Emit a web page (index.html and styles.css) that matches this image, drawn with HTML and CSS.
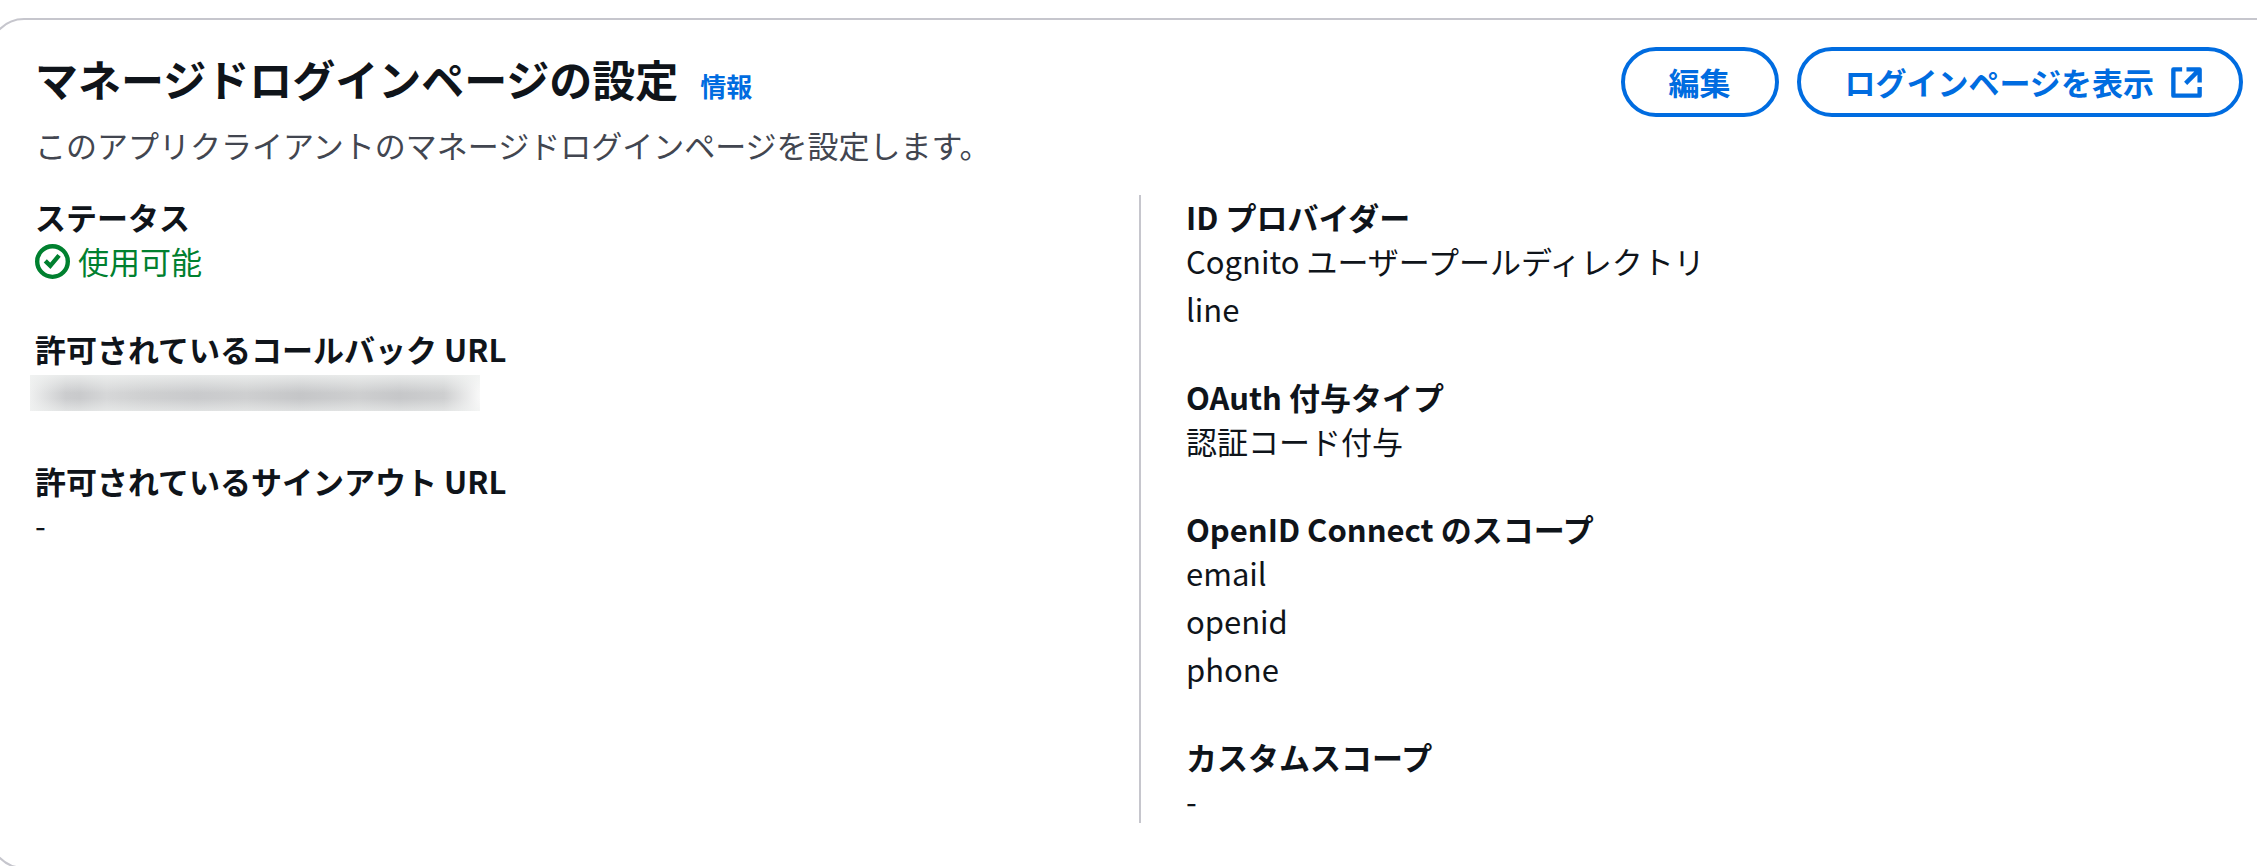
FILE: index.html
```
<!DOCTYPE html>
<html lang="ja">
<head>
    <meta charset="UTF-8">
    <meta name="viewport" content="width=device-width, initial-scale=1.0">
    <title>マネージドログインページの設定</title>
    <link rel="stylesheet" href="styles.css">
</head>
<body>
    <section class="container">
        <header class="header">
            <div class="header-text">
                <div class="title-row">
                    <h2>マネージドログインページの設定</h2>
                    <a class="info-link" href="#">情報</a>
                </div>
                <p class="description">このアプリクライアントのマネージドログインページを設定します。</p>
            </div>
            <div class="actions">
                <button class="button" type="button">編集</button>
                <button class="button button-external" type="button">
                    ログインページを表示
                    <svg class="icon" viewBox="0 0 16 16" fill="none" stroke="currentColor" stroke-width="2" stroke-linejoin="round" aria-hidden="true">
                        <path d="M6 2H2v12h12v-4"/>
                        <path d="M8 2h6v6M14 2L7.6 8.4"/>
                    </svg>
                </button>
            </div>
        </header>

        <div class="columns">
            <dl class="column">
                <div class="field">
                    <dt>ステータス</dt>
                    <dd class="status">
                        <svg class="icon" viewBox="0 0 16 16" fill="none" stroke="currentColor" stroke-width="2" aria-hidden="true">
                            <circle cx="8" cy="8" r="7"/>
                            <path d="M4.7 7.7l2.3 2.3 4-4.8"/>
                        </svg>
                        使用可能
                    </dd>
                </div>
                <div class="field">
                    <dt>許可されているコールバック URL</dt>
                    <dd class="masked-row"><span class="masked"></span></dd>
                </div>
                <div class="field">
                    <dt>許可されているサインアウト URL</dt>
                    <dd>-</dd>
                </div>
            </dl>
            <dl class="column">
                <div class="field">
                    <dt>ID プロバイダー</dt>
                    <dd>Cognito ユーザープールディレクトリ</dd>
                    <dd>line</dd>
                </div>
                <div class="field">
                    <dt>OAuth 付与タイプ</dt>
                    <dd>認証コード付与</dd>
                </div>
                <div class="field">
                    <dt>OpenID Connect のスコープ</dt>
                    <dd>email</dd>
                    <dd>openid</dd>
                    <dd>phone</dd>
                </div>
                <div class="field">
                    <dt>カスタムスコープ</dt>
                    <dd>-</dd>
                </div>
            </dl>
        </div>
    </section>
</body>
</html>
```
FILE: styles.css
```
* {
    box-sizing: border-box;
}

body {
    margin: 0;
    padding-top: 18px;
    background: #fff;
    color: #0f141a;
    font-family: "Noto Sans CJK JP", sans-serif;
    font-size: 31px;
    line-height: 44px;
    overflow: hidden;
}

/* the card runs past both sides of the window */
.container {
    margin: 0 -32px 0 -11px;
    padding: 27px 44px 44px;
    border: 2px solid #c6c6cd;
    border-radius: 35px;
}

.header {
    display: flex;
    justify-content: space-between;
    align-items: flex-start;
    margin-bottom: 28px;
}

.header-text {
    padding-top: 5px;
}

.title-row {
    display: flex;
    align-items: baseline;
    gap: 22px;
}

h2 {
    margin: 0;
    font-size: 43px;
    font-weight: 700;
    line-height: 53px;
}

.info-link {
    color: #006ce0;
    font-size: 26px;
    font-weight: 700;
    line-height: 26px;
    text-decoration: none;
}

.description {
    margin: 18px 0 0;
    color: #424650;
}

.actions {
    display: flex;
    gap: 18px;
}

.button {
    display: flex;
    align-items: center;
    gap: 15px;
    padding: 9px 44px;
    border: 4px solid #006ce0;
    border-radius: 44px;
    background: #fff;
    color: #006ce0;
    font: inherit;
    font-weight: 700;
    cursor: pointer;
}

.button-external {
    padding-right: 35px;
}

.icon {
    width: 35px;
    height: 35px;
    flex-shrink: 0;
}

.columns {
    display: grid;
    grid-template-columns: 1fr 1fr;
}

.column {
    display: flex;
    flex-direction: column;
    gap: 44px;
    margin: 0;
}

.column + .column {
    padding-left: 45px;
    border-left: 2px solid #c6c6cd;
}

dt {
    font-weight: 700;
}

dd {
    margin: 0;
}

dd + dd {
    margin-top: 4px;
}

.status {
    display: flex;
    align-items: center;
    gap: 8px;
    color: #00802f;
}

.masked-row {
    padding: 4px 0;
}

/* hidden value: soft grey band, lighter at the edges */
.masked {
    display: block;
    width: 450px;
    height: 36px;
    margin-left: -5px;
    background:
        linear-gradient(rgba(240, 242, 241, 0.8), rgba(240, 242, 241, 0) 50%, rgba(240, 242, 241, 0) 65%, rgba(240, 242, 241, 0.6)),
        linear-gradient(90deg, #eff0f0, #cbccce 8%, #c9cacc 11%, #d6d7d8 17%, #cfd0d1 25%, #c9cacc 37%, #cecfd0 48%, #c5c6c8 60%, #cecfd0 73%, #c6c7c9 82%, #cecfd0 92%, #f9f9f9);
}
```
